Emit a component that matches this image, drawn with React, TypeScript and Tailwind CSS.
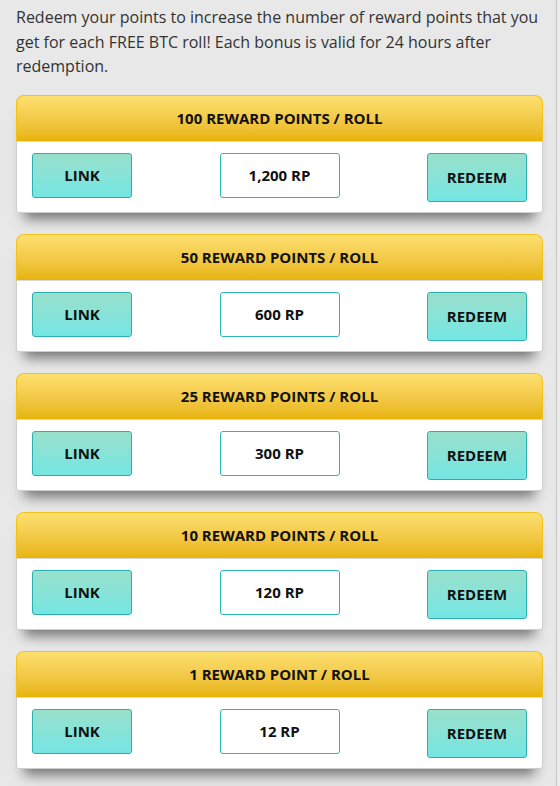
const tiers = [
  { title: "100 REWARD POINTS / ROLL", cost: "1,200 RP" },
  { title: "50 REWARD POINTS / ROLL", cost: "600 RP" },
  { title: "25 REWARD POINTS / ROLL", cost: "300 RP" },
  { title: "10 REWARD POINTS / ROLL", cost: "120 RP" },
  { title: "1 REWARD POINT / ROLL", cost: "12 RP" },
];

function TierCard({ title, cost }: { title: string; cost: string }) {
  return (
    <div className="rounded-t-[8px] rounded-b-[3px] shadow-[0_14px_12px_-8px_rgba(0,0,0,0.5)]">
      <div className="h-[47px] flex items-center justify-center rounded-t-[8px] border border-[#f2c21a] border-b-[#d9d9d9] bg-gradient-to-b from-[#fde06e] to-[#e8b400] text-[15px] font-bold text-[#111]">
        {title}
      </div>
      <div className="flex items-start justify-between bg-white border border-t-0 border-[#cfcfcf] rounded-b-[3px] pt-[11px] pb-[10px] px-[15px]">
        <button className="w-[100px] h-[45px] rounded-[3px] border border-[#2bb0b0] bg-gradient-to-b from-[#98e0cb] to-[#74e6e3] text-[15px] font-bold text-[#111]">
          LINK
        </button>
        <div className="w-[120px] h-[45px] flex items-center justify-center rounded-[3px] border border-[#2bb5b8] text-[15px] font-bold text-[#111]">
          {cost}
        </div>
        <button className="w-[100px] h-[49px] rounded-[3px] border border-[#2bb0b0] bg-gradient-to-b from-[#98e0cb] to-[#74e6e3] text-[15px] font-bold text-[#111]">
          REDEEM
        </button>
      </div>
    </div>
  );
}

export default function App() {
  return (
    <div
      className="min-h-[786px] bg-[#ededed]"
      style={{ fontFamily: '"Open Sans", "Liberation Sans", sans-serif' }}
    >
      <div className="w-[557px] min-h-[786px] bg-[#e8e8e8] border-r border-[#c4c4c4] pl-4 pr-[13px] pt-[5px]">
        <p className="text-[16px] leading-[24.5px] text-[#333]">
          Redeem your points to increase the number of reward points that you
          get for each FREE BTC roll! Each bonus is valid for 24 hours after
          redemption.
        </p>
        <div className="mt-[16px] flex flex-col gap-[21px]">
          {tiers.map((t) => (
            <TierCard key={t.cost} title={t.title} cost={t.cost} />
          ))}
        </div>
      </div>
    </div>
  );
}
